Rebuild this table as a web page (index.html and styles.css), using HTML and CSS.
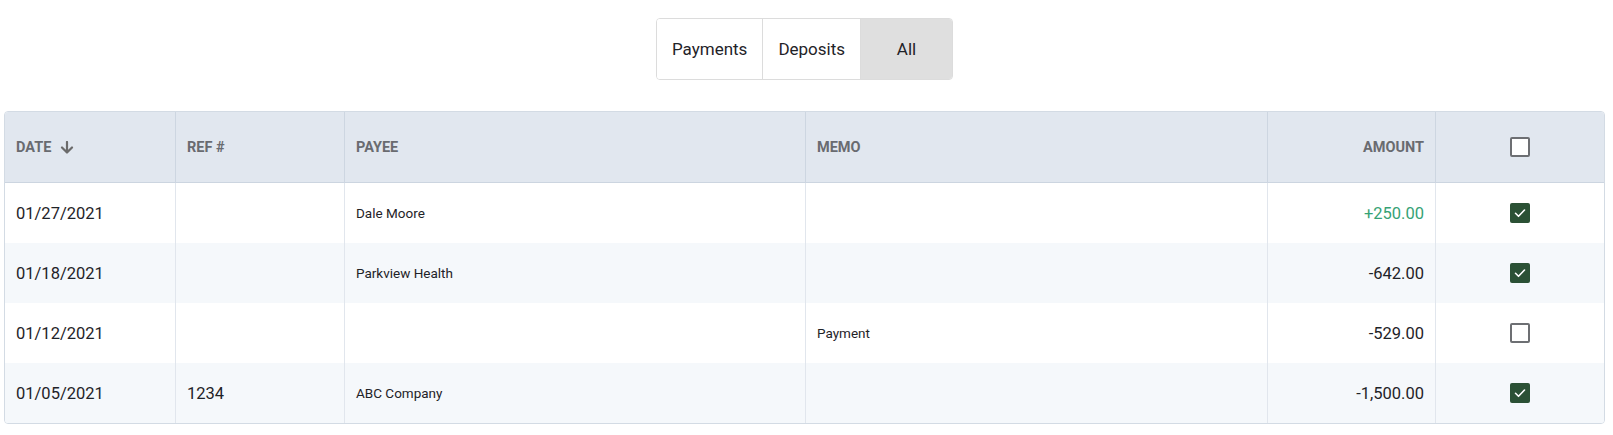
FILE: index.html
```html
<!DOCTYPE html>
<html lang="en">
<head>
<meta charset="utf-8">
<title>Transactions</title>
<link rel="stylesheet" href="styles.css">
</head>
<body>
<div class="page">
  <div class="toolbar">
    <div class="segmented">
      <button class="seg">Payments</button>
      <button class="seg">Deposits</button>
      <button class="seg seg-all active">All</button>
    </div>
  </div>
  <div class="table-wrap">
    <table class="grid">
      <colgroup>
        <col class="c-date"><col class="c-ref"><col class="c-payee"><col class="c-memo"><col class="c-amount"><col class="c-check">
      </colgroup>
      <thead>
        <tr>
          <th><span class="sort">DATE <svg class="arrow" width="14" height="13" viewBox="0 0 14 13"><path d="M7 1v10M2 6.5l5 5 5-5" fill="none" stroke="#6b6b6b" stroke-width="2.2" stroke-linecap="round" stroke-linejoin="round"/></svg></span></th>
          <th>REF #</th>
          <th>PAYEE</th>
          <th>MEMO</th>
          <th class="right">AMOUNT</th>
          <th class="center"><span class="cb"></span></th>
        </tr>
      </thead>
      <tbody>
        <tr>
          <td>01/27/2021</td><td></td><td class="small">Dale Moore</td><td class="small"></td>
          <td class="right pos">+250.00</td>
          <td class="center"><span class="cb checked"><svg width="20" height="20" viewBox="0 0 20 20"><path d="M5.5 10.3l3 3 6-6.3" fill="none" stroke="#fff" stroke-width="1.6" stroke-linecap="round" stroke-linejoin="round"/></svg></span></td>
        </tr>
        <tr class="alt">
          <td>01/18/2021</td><td></td><td class="small">Parkview Health</td><td class="small"></td>
          <td class="right">-642.00</td>
          <td class="center"><span class="cb checked"><svg width="20" height="20" viewBox="0 0 20 20"><path d="M5.5 10.3l3 3 6-6.3" fill="none" stroke="#fff" stroke-width="1.6" stroke-linecap="round" stroke-linejoin="round"/></svg></span></td>
        </tr>
        <tr>
          <td>01/12/2021</td><td></td><td class="small"></td><td class="small">Payment</td>
          <td class="right">-529.00</td>
          <td class="center"><span class="cb"></span></td>
        </tr>
        <tr class="alt">
          <td>01/05/2021</td><td>1234</td><td class="small">ABC Company</td><td class="small"></td>
          <td class="right">-1,500.00</td>
          <td class="center"><span class="cb checked"><svg width="20" height="20" viewBox="0 0 20 20"><path d="M5.5 10.3l3 3 6-6.3" fill="none" stroke="#fff" stroke-width="1.6" stroke-linecap="round" stroke-linejoin="round"/></svg></span></td>
        </tr>
      </tbody>
    </table>
  </div>
</div>
</body>
</html>
```

FILE: styles.css
```css
* { box-sizing: border-box; }
html, body { margin: 0; padding: 0; background: #fff; }
body {
  font-family: Roboto, "Liberation Sans", Arial, sans-serif;
  color: #1f2328;
}
.page {
  width: 1601px;
  margin-left: 4px;
  padding-top: 18px;
}
.toolbar {
  display: flex;
  justify-content: center;
  margin-bottom: 31px;
}
.segmented {
  display: flex;
  border: 1px solid #dcdcdc;
  border-radius: 4px;
  overflow: hidden;
  height: 62px;
}
.seg {
  font-family: inherit;
  font-size: 17px;
  color: #1f2328;
  background: #fff;
  border: 0;
  border-left: 1px solid #dcdcdc;
  padding: 0 15px;
  margin: 0;
  height: 100%;
  cursor: pointer;
}
.seg:first-child { border-left: 0; }
.seg-all { min-width: 92px; }
.seg.active { background: #dfdfdf; }

.table-wrap {
  border: 1px solid #d3dbe4;
  border-radius: 4px;
  overflow: hidden;
}
.grid {
  width: 100%;
  table-layout: fixed;
  border-collapse: separate;
  border-spacing: 0;
}
.c-date { width: 170px; }
.c-ref { width: 169px; }
.c-payee { width: 461px; }
.c-memo { width: 462px; }
.c-amount { width: 168px; }
.c-check { width: auto; }

th, td {
  padding: 0 11px;
  text-align: left;
  border-left: 1px solid #d7dee7;
  white-space: nowrap;
}
th:first-child, td:first-child { border-left: 0; }
th {
  height: 71px;
  background: #e1e7ef;
  color: #696b70;
  font-size: 14.5px;
  font-weight: 700;
  border-bottom: 1px solid #ccd5e0;
  border-left-color: #cdd6e1;
}
td {
  height: 60px;
  font-size: 16.5px;
  color: #1f2328;
  border-left-color: #e1e6ed;
}
td.small { font-size: 13.5px; }
tr.alt td { background: #f5f8fb; }
.right { text-align: right; }
.center { text-align: center; }
.pos { color: #36a275; }

.sort { display: inline-flex; align-items: center; gap: 9px; }
.arrow { display: block; }

.cb {
  display: inline-block;
  vertical-align: middle;
  width: 20px;
  height: 20px;
  border: 2px solid #6d6f73;
  border-radius: 2px;
  background: #fff;
}
.cb.checked {
  border: 0;
  background: #2b5135;
}
.cb svg { display: block; }
```
